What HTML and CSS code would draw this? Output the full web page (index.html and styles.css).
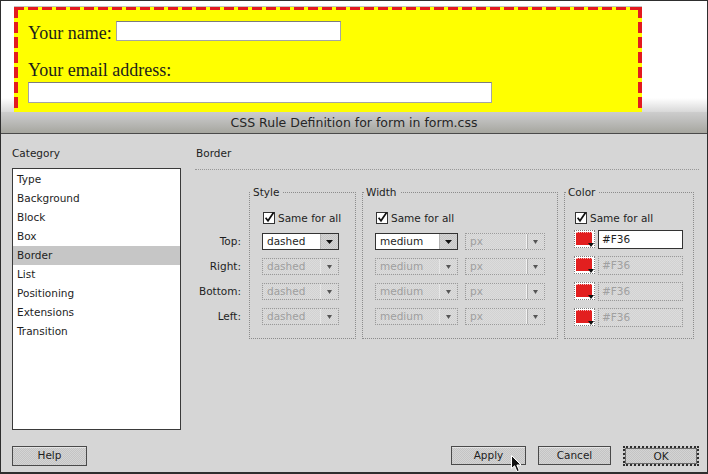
FILE: index.html
```html
<!DOCTYPE html>
<html>
<head>
<meta charset="utf-8">
<title>CSS Rule Definition</title>
<link rel="stylesheet" href="styles.css">
</head>
<body>
<div class="window">
  <div class="preview">
    <div class="demo-form">
      <div class="name-row">
        <span class="serif-label">Your name:</span>
        <span class="text-field name-field"></span>
      </div>
      <div class="serif-label email-label">Your email address:</div>
      <div class="text-field email-field"></div>
    </div>
  </div>

  <div class="titlebar">CSS Rule Definition for form in form.css</div>

  <div class="dialog">
    <div class="dialog-main">
      <div class="category-col">
        <div class="col-heading">Category</div>
        <ul class="category-list">
          <li>Type</li>
          <li>Background</li>
          <li>Block</li>
          <li>Box</li>
          <li class="selected">Border</li>
          <li>List</li>
          <li>Positioning</li>
          <li>Extensions</li>
          <li>Transition</li>
        </ul>
      </div>

      <div class="panel">
        <div class="panel-heading">Border</div>
        <div class="border-grid">
          <div class="side-labels">
            <div class="side-label">Top:</div>
            <div class="side-label">Right:</div>
            <div class="side-label">Bottom:</div>
            <div class="side-label">Left:</div>
          </div>

          <fieldset class="group style-group">
            <legend>Style</legend>
            <div class="group-body">
              <div class="check-row">
                <svg class="check" width="12" height="12" viewBox="0 0 12 12"><rect x="0.5" y="0.5" width="11" height="11" fill="#fff" stroke="#333"/><path d="M2.6 5.8 L5 8.8 L10.6 0.6" fill="none" stroke="#111" stroke-width="1.7"/></svg>
                <span>Same for all</span>
              </div>
              <div class="select-rows">
                <div class="select sel-style"><span class="select-text">dashed</span><span class="select-arrow"><svg width="7" height="4" viewBox="0 0 7 4"><path d="M0 0H7L3.5 4Z" fill="#111"/></svg></span></div>
                <div class="select sel-style disabled"><span class="select-text">dashed</span><span class="select-arrow"><svg width="5" height="4" viewBox="0 0 5 4"><path d="M0 0H5L2.5 4Z" fill="#555"/></svg></span></div>
                <div class="select sel-style disabled"><span class="select-text">dashed</span><span class="select-arrow"><svg width="5" height="4" viewBox="0 0 5 4"><path d="M0 0H5L2.5 4Z" fill="#555"/></svg></span></div>
                <div class="select sel-style disabled"><span class="select-text">dashed</span><span class="select-arrow"><svg width="5" height="4" viewBox="0 0 5 4"><path d="M0 0H5L2.5 4Z" fill="#555"/></svg></span></div>
              </div>
            </div>
          </fieldset>

          <fieldset class="group width-group">
            <legend>Width</legend>
            <div class="group-body">
              <div class="check-row">
                <svg class="check" width="12" height="12" viewBox="0 0 12 12"><rect x="0.5" y="0.5" width="11" height="11" fill="#fff" stroke="#333"/><path d="M2.6 5.8 L5 8.8 L10.6 0.6" fill="none" stroke="#111" stroke-width="1.7"/></svg>
                <span>Same for all</span>
              </div>
              <div class="select-rows">
                <div class="pair">
                  <div class="select sel-width"><span class="select-text">medium</span><span class="select-arrow"><svg width="7" height="4" viewBox="0 0 7 4"><path d="M0 0H7L3.5 4Z" fill="#111"/></svg></span></div>
                  <div class="select sel-unit disabled"><span class="select-text">px</span><span class="select-arrow unit-arrow"><svg width="5" height="4" viewBox="0 0 5 4"><path d="M0 0H5L2.5 4Z" fill="#555"/></svg></span></div>
                </div>
                <div class="pair">
                  <div class="select sel-width disabled"><span class="select-text">medium</span><span class="select-arrow"><svg width="5" height="4" viewBox="0 0 5 4"><path d="M0 0H5L2.5 4Z" fill="#555"/></svg></span></div>
                  <div class="select sel-unit disabled"><span class="select-text">px</span><span class="select-arrow unit-arrow"><svg width="5" height="4" viewBox="0 0 5 4"><path d="M0 0H5L2.5 4Z" fill="#555"/></svg></span></div>
                </div>
                <div class="pair">
                  <div class="select sel-width disabled"><span class="select-text">medium</span><span class="select-arrow"><svg width="5" height="4" viewBox="0 0 5 4"><path d="M0 0H5L2.5 4Z" fill="#555"/></svg></span></div>
                  <div class="select sel-unit disabled"><span class="select-text">px</span><span class="select-arrow unit-arrow"><svg width="5" height="4" viewBox="0 0 5 4"><path d="M0 0H5L2.5 4Z" fill="#555"/></svg></span></div>
                </div>
                <div class="pair">
                  <div class="select sel-width disabled"><span class="select-text">medium</span><span class="select-arrow"><svg width="5" height="4" viewBox="0 0 5 4"><path d="M0 0H5L2.5 4Z" fill="#555"/></svg></span></div>
                  <div class="select sel-unit disabled"><span class="select-text">px</span><span class="select-arrow unit-arrow"><svg width="5" height="4" viewBox="0 0 5 4"><path d="M0 0H5L2.5 4Z" fill="#555"/></svg></span></div>
                </div>
              </div>
            </div>
          </fieldset>

          <fieldset class="group color-group">
            <legend>Color</legend>
            <div class="group-body">
              <div class="check-row">
                <svg class="check" width="12" height="12" viewBox="0 0 12 12"><rect x="0.5" y="0.5" width="11" height="11" fill="#fff" stroke="#333"/><path d="M2.6 5.8 L5 8.8 L10.6 0.6" fill="none" stroke="#111" stroke-width="1.7"/></svg>
                <span>Same for all</span>
              </div>
              <div class="color-rows">
                <div class="color-row">
                  <span class="swatch"><span class="swatch-fill"></span><svg class="swatch-tri" width="6" height="4" viewBox="0 0 6 4"><path d="M0 0H6L3 4Z" fill="#111"/></svg></span>
                  <span class="color-input">#F36</span>
                </div>
                <div class="color-row">
                  <span class="swatch"><span class="swatch-fill"></span><svg class="swatch-tri" width="6" height="4" viewBox="0 0 6 4"><path d="M0 0H6L3 4Z" fill="#111"/></svg></span>
                  <span class="color-input disabled">#F36</span>
                </div>
                <div class="color-row">
                  <span class="swatch"><span class="swatch-fill"></span><svg class="swatch-tri" width="6" height="4" viewBox="0 0 6 4"><path d="M0 0H6L3 4Z" fill="#111"/></svg></span>
                  <span class="color-input disabled">#F36</span>
                </div>
                <div class="color-row">
                  <span class="swatch"><span class="swatch-fill"></span><svg class="swatch-tri" width="6" height="4" viewBox="0 0 6 4"><path d="M0 0H6L3 4Z" fill="#111"/></svg></span>
                  <span class="color-input disabled">#F36</span>
                </div>
              </div>
            </div>
          </fieldset>
        </div>
      </div>
    </div>

    <div class="dialog-footer">
      <button class="btn btn-help">Help</button>
      <div class="footer-spacer"></div>
      <button class="btn btn-apply">Apply<svg class="cursor" width="12" height="18" viewBox="0 0 12 18"><path d="M0.5 0.5 L0.5 13.5 L3.6 10.8 L6 16.6 L8.3 15.6 L5.9 10 L10 10 Z" fill="#111" stroke="#fff" stroke-width="1"/></svg></button>
      <button class="btn btn-cancel">Cancel</button>
      <button class="btn btn-ok">OK</button>
    </div>
  </div>
</div>
</body>
</html>
```

FILE: styles.css
```css
* {
  box-sizing: border-box;
}

html, body {
  margin: 0;
  padding: 0;
}

body {
  width: 708px;
  height: 474px;
  overflow: hidden;
  background: #ffffff;
  font-family: "DejaVu Sans", "Noto Sans", sans-serif;
}

.window {
  width: 708px;
  height: 474px;
  border: 1px solid #2e2e2e;
  border-bottom-width: 2px;
  display: flex;
  flex-direction: column;
  overflow: hidden;
}

/* ---------- design preview ---------- */
.preview {
  flex: none;
  height: 111px;
  overflow: hidden;
  padding: 6px 0 0 13px;
  background: linear-gradient(#ffffff 0, #ffffff 97px, #d8d8d8 111px);
}

.demo-form {
  width: 628px;
  height: 130px;
  padding: 14px 0 0 14px;
  box-shadow: 0 -1px 0 #c4c4c4;
  background:
    repeating-linear-gradient(90deg, #e31a1f 0 10px, transparent 10px 14px) left top / 100% 3px no-repeat,
    repeating-linear-gradient(90deg, #e31a1f 0 10px, transparent 10px 14px) left bottom / 100% 3px no-repeat,
    repeating-linear-gradient(180deg, #e31a1f 0 11px, transparent 11px 15px) left top / 4px 100% no-repeat,
    repeating-linear-gradient(180deg, #e31a1f 0 11px, transparent 11px 15px) right top / 4px 100% no-repeat,
    #ffff00;
  font-family: "Liberation Serif", "Times New Roman", serif;
  font-size: 18px;
  color: #1c1c1c;
}

.name-row {
  display: flex;
  align-items: flex-start;
  gap: 4px;
  height: 20px;
}

.serif-label {
  display: block;
  line-height: 20px;
}

.name-row .serif-label {
  margin-top: 2px;
}

.text-field {
  display: block;
  background: #ffffff;
  border: 1px solid #a4a4a4;
  border-top-color: #7c7c7c;
}

.name-field {
  width: 225px;
  height: 20px;
}

.email-label {
  margin-top: 19px;
}

.email-field {
  margin-top: 2px;
  width: 464px;
  height: 21px;
}

/* ---------- title bar ---------- */
.titlebar {
  flex: none;
  height: 22px;
  line-height: 21px;
  border-bottom: 1px solid #4a4a4a;
  text-align: center;
  font-size: 12.5px;
  color: #262626;
  background: linear-gradient(#cdcdcd 0%, #bcbcba 45%, #a6a69f 100%);
}

/* ---------- dialog ---------- */
.dialog {
  flex: 1;
  display: flex;
  flex-direction: column;
  padding: 12px 8px 0 10px;
  background: #d6d6d6;
  font-size: 10.5px;
  color: #1e1e1e;
}

.dialog-main {
  display: flex;
  height: 284px;
}

.category-col {
  width: 170px;
  flex: none;
}

.col-heading {
  height: 22px;
  line-height: 14px;
  padding-left: 1px;
}

.category-list {
  list-style: none;
  margin: 0 0 0 1px;
  padding: 1px 0 0;
  width: 169px;
  height: 262px;
  border: 1px solid #3a3a3a;
  background: #ffffff;
}

.category-list li {
  height: 19px;
  line-height: 19px;
  padding-left: 4px;
}

.category-list li.selected {
  background: #c6c6c6;
}

.panel {
  flex: none;
  width: 504px;
  margin-left: 14px;
}

.panel-heading {
  line-height: 14px;
  padding-left: 1px;
  padding-bottom: 9px;
  border-bottom: 1px dotted #979797;
}

.border-grid {
  display: flex;
  align-items: stretch;
  padding-top: 15px;
}

.side-labels {
  width: 46px;
  margin-right: 8px;
  padding-top: 48px;
  display: flex;
  flex-direction: column;
  gap: 8px;
}

.side-label {
  height: 17px;
  line-height: 17px;
  text-align: right;
}

.group {
  margin: 0;
  padding: 0;
  border: 1px dotted #8c8c8c;
  min-width: 0;
}

.group legend {
  margin-left: 1px;
  padding: 0 3px 0 2px;
  line-height: 14px;
}

.style-group {
  width: 107px;
  margin-right: 6px;
}

.width-group {
  width: 196px;
  margin-right: 6px;
}

.color-group {
  width: 130px;
}

.group-body {
  padding-top: 11px;
  padding-bottom: 11px;
}

.style-group .group-body,
.width-group .group-body {
  padding-left: 12px;
}

.color-group .group-body {
  padding-left: 9px;
}

.check-row {
  display: flex;
  align-items: center;
  gap: 3px;
  height: 16px;
  padding-left: 1px;
}

.check {
  display: block;
  flex: none;
}

.select-rows {
  margin-top: 7px;
  display: flex;
  flex-direction: column;
  gap: 8px;
}

.pair {
  display: flex;
  gap: 7px;
}

.select {
  display: flex;
  height: 17px;
  border: 1px solid #333333;
  background: #ffffff;
}

.select-text {
  flex: 1;
  line-height: 15px;
  padding-left: 4px;
  white-space: nowrap;
  overflow: hidden;
}

.select-arrow {
  flex: none;
  width: 18px;
  display: flex;
  align-items: center;
  justify-content: center;
  border-left: 1px solid #b4b4b4;
  background: repeating-conic-gradient(#c6c6c6 0 25%, #d4d4d4 0 50%) 0 0 / 2px 2px;
}

.select-arrow svg {
  display: block;
}

.sel-style {
  width: 77px;
}

.sel-width {
  width: 83px;
}

.sel-unit {
  width: 80px;
}

.select.disabled {
  border: 1px dotted #9a9a9a;
  background: repeating-conic-gradient(#d2d2d2 0 25%, #dcdcdc 0 50%) 0 0 / 2px 2px;
  color: #9e9e9e;
}

.select.disabled .select-arrow {
  border-left: 1px solid #e6e6e6;
  background: none;
}

.select.disabled .unit-arrow {
  border-left: 1px solid #f2f2f2;
  box-shadow: inset 1px 0 0 #b2b2b2;
}

.color-rows {
  margin-top: 4px;
  display: flex;
  flex-direction: column;
  gap: 7px;
}

.color-row {
  display: flex;
  align-items: flex-start;
  gap: 3px;
  height: 19px;
}

.swatch {
  position: relative;
  flex: none;
  width: 21px;
  height: 18px;
  padding: 1px 2px 2px 1px;
  border: 1px dotted #7e7e7e;
  background: #ffffff;
}

.swatch-fill {
  display: block;
  width: 100%;
  height: 100%;
  background: #e21f1f;
  border-top: 1px dotted #f7b0b0;
}

.swatch-tri {
  position: absolute;
  right: 0;
  bottom: 0;
  display: block;
}

.color-input {
  display: block;
  width: 85px;
  height: 19px;
  line-height: 17px;
  padding-left: 3px;
  border: 1px solid #333333;
  background: #ffffff;
}

.color-input.disabled {
  border: 1px dotted #9a9a9a;
  background: repeating-conic-gradient(#d2d2d2 0 25%, #dcdcdc 0 50%) 0 0 / 2px 2px;
  color: #a0a0a0;
}

/* ---------- footer buttons ---------- */
.dialog-footer {
  display: flex;
  align-items: center;
  height: 21px;
  margin-top: 15px;
}

.footer-spacer {
  flex: 1;
}

.btn {
  position: relative;
  height: 19px;
  padding: 0;
  border: 1px solid #4a4a4a;
  background: repeating-conic-gradient(#c4c4c4 0 25%, #d4d4d4 0 50%) 0 0 / 2px 2px;
  box-shadow: inset 0 1px 0 #e4e4e4;
  font-family: "DejaVu Sans", "Noto Sans", sans-serif;
  font-size: 10.5px;
  color: #1e1e1e;
  line-height: 17px;
}

.btn-help {
  width: 75px;
  height: 20px;
  margin-left: 1px;
}

.btn-apply {
  width: 75px;
}

.btn-cancel {
  width: 73px;
  margin-left: 12px;
}

.btn-ok {
  width: 76px;
  height: 20px;
  margin-left: 12px;
  border: 2px dotted #2e2e2e;
  box-shadow: inset 0 0 0 1px #6a6a6a;
}

.cursor {
  position: absolute;
  left: 59px;
  top: 8px;
  display: block;
}
```
